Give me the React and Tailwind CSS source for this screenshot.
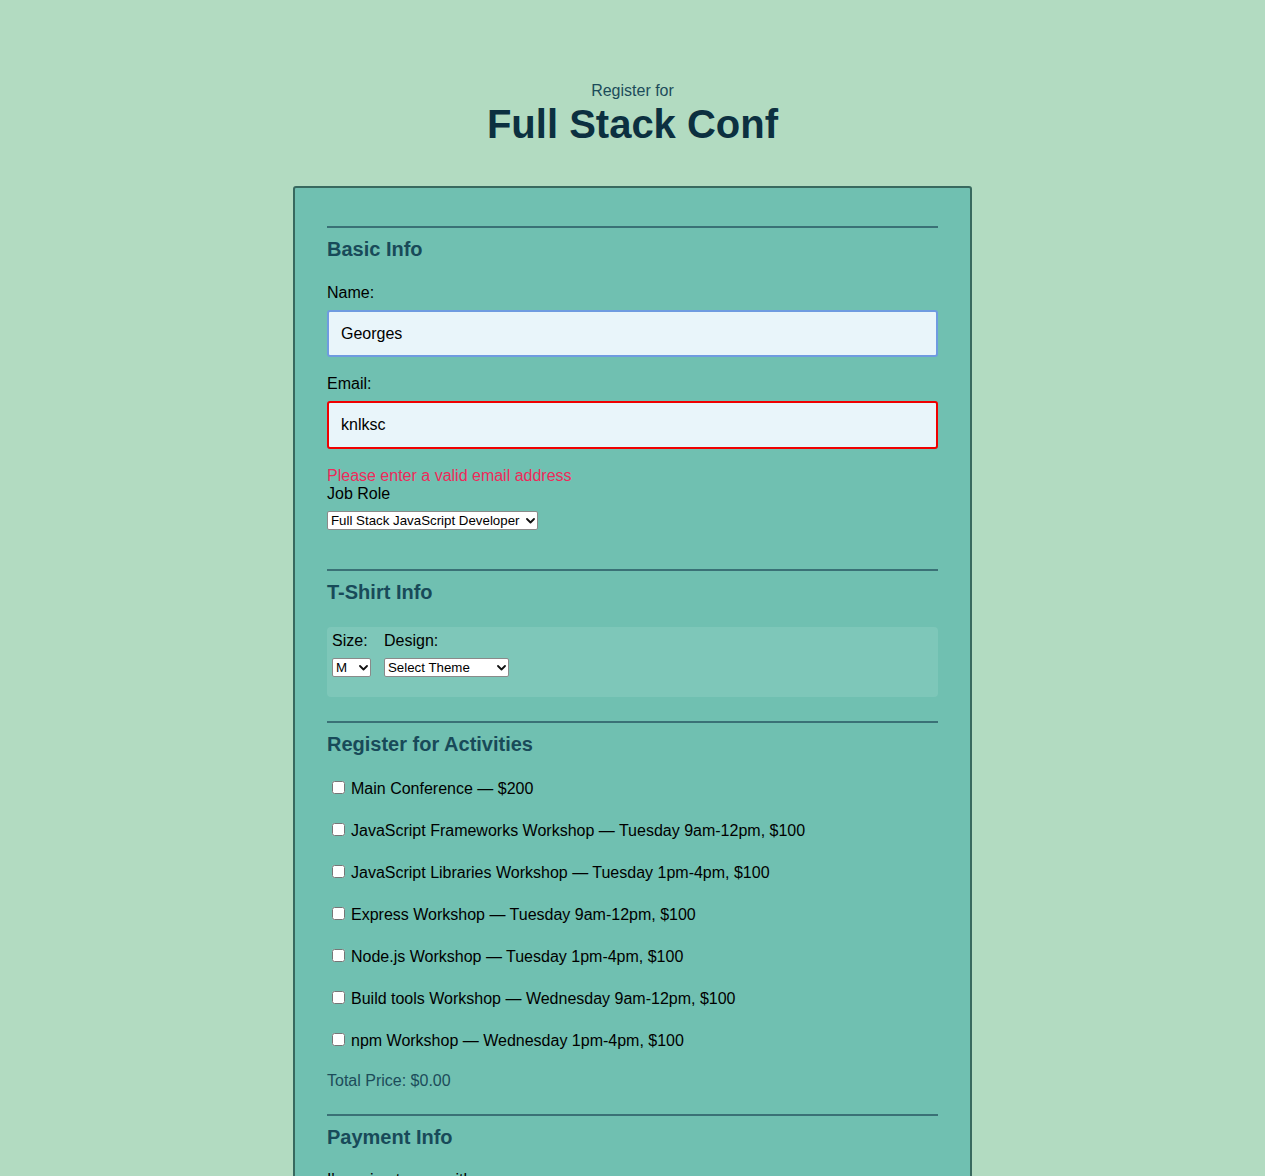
import { useState } from "react";

const activities = [
  "Main Conference — $200",
  "JavaScript Frameworks Workshop — Tuesday 9am-12pm, $100",
  "JavaScript Libraries Workshop — Tuesday 1pm-4pm, $100",
  "Express Workshop — Tuesday 9am-12pm, $100",
  "Node.js Workshop — Tuesday 1pm-4pm, $100",
  "Build tools Workshop — Wednesday 9am-12pm, $100",
  "npm Workshop — Wednesday 1pm-4pm, $100",
];

const Chevron = () => (
  <svg
    className="pointer-events-none absolute right-[3px] top-1/2 -translate-y-1/2"
    width="9"
    height="6"
    viewBox="0 0 9 6"
    fill="none"
  >
    <path d="M1 1l3.5 3.5L8 1" stroke="#111" strokeWidth="1.8" strokeLinecap="round" strokeLinejoin="round" />
  </svg>
);

const Select = ({ width, value, options }) => (
  <div className={`relative ${width} h-[19px]`}>
    <select
      defaultValue={value}
      className="block w-full h-full appearance-none bg-white border border-[#8a8a8a] rounded-[2px] pl-[3px] pr-[14px] text-[13.3px] leading-[17px] text-black outline-none"
    >
      {options.map(o => (
        <option key={o}>{o}</option>
      ))}
    </select>
    <Chevron />
  </div>
);

const SectionHead = ({ children }) => (
  <>
    <div className="h-[2px] bg-[#3a7176]" />
    <h2 className="mt-[10px] text-[20px] leading-[23px] font-bold text-[#184a59]">{children}</h2>
  </>
);

export default function App() {
  const [name, setName] = useState("Georges");
  const [email, setEmail] = useState("knlksc");

  return (
    <div
      className="min-h-screen bg-[#b2dbc1] pt-[82px] pb-10"
      style={{ fontFamily: '"Liberation Sans", Arial, sans-serif' }}
    >
      <header className="text-center">
        <p className="text-[16px] leading-[18px] text-[#1c4c5a]">Register for</p>
        <h1 className="mt-[1px] text-[40px] leading-[46px] font-bold text-[#0c3040]">Full Stack Conf</h1>
      </header>

      <form className="mx-auto mt-[39px] w-[679px] bg-[#70c0b1] border-2 border-[#38695f] rounded-[3px] px-[32px] pt-[38px] pb-10">
        <SectionHead>Basic Info</SectionHead>
        <label className="block mt-[23px] text-[16px] leading-[18px] text-black">Name:</label>
        <input
          value={name}
          onChange={e => setName(e.target.value)}
          className="block mt-[8px] w-full h-[47px] bg-[#e9f5fa] border-2 border-[#6f9be0] rounded-[3px] px-[12px] text-[16px] text-black outline-none"
        />
        <label className="block mt-[18px] text-[16px] leading-[18px] text-black">Email:</label>
        <input
          value={email}
          onChange={e => setEmail(e.target.value)}
          className="block mt-[8px] w-full h-[48px] bg-[#e9f5fa] border-2 border-[#f00000] rounded-[3px] px-[12px] text-[16px] text-black outline-none"
        />
        <p className="mt-[18px] text-[16px] leading-[18px] text-[#ee2a5a]">Please enter a valid email address</p>
        <label className="block text-[16px] leading-[18px] text-black">Job Role</label>
        <div className="mt-[8px]">
          <Select
            width="w-[211px]"
            value="Full Stack JavaScript Developer"
            options={["Full Stack JavaScript Developer", "Front End Developer", "Back End Developer", "Designer", "Student", "Other"]}
          />
        </div>

        <div className="mt-[39px]">
          <SectionHead>T-Shirt Info</SectionHead>
        </div>
        <div className="mt-[23px] h-[70px] bg-[#7ec7b9] rounded-[4px] pl-[5px] pt-[5px] flex gap-[13px]">
          <div>
            <div className="text-[16px] leading-[18px] text-black">Size:</div>
            <div className="mt-[8px]">
              <Select width="w-[39px]" value="M" options={["S", "M", "L", "XL"]} />
            </div>
          </div>
          <div>
            <div className="text-[16px] leading-[18px] text-black">Design:</div>
            <div className="mt-[8px]">
              <Select width="w-[125px]" value="Select Theme" options={["Select Theme", "Theme - JS Puns", "Theme - I ♥ JS"]} />
            </div>
          </div>
        </div>

        <div className="mt-[24px]">
          <SectionHead>Register for Activities</SectionHead>
        </div>
        <div className="mt-[11px]">
          {activities.map(a => (
            <label key={a} className="flex items-center h-[42px] pl-[5px] text-[16px] text-black">
              <input type="checkbox" className="m-0 w-[13px] h-[13px] -translate-y-[1px]" />
              <span className="ml-[6px] translate-y-[1px]">{a}</span>
            </label>
          ))}
        </div>
        <p className="mt-[10px] text-[16px] leading-[18px] text-[#1c4c5a] translate-y-[1px]">Total Price: $0.00</p>

        <div className="mt-[25px]">
          <SectionHead>Payment Info</SectionHead>
        </div>
        <p className="mt-[22px] text-[16px] leading-[18px] text-black">I'm going to pay with:</p>
        <div className="mt-[9px]">
          <Select width="w-[160px]" value="Credit Card" options={["Select Payment Method", "Credit Card", "PayPal", "Bitcoin"]} />
        </div>
        <div className="h-[300px]" />
      </form>
    </div>
  );
}
